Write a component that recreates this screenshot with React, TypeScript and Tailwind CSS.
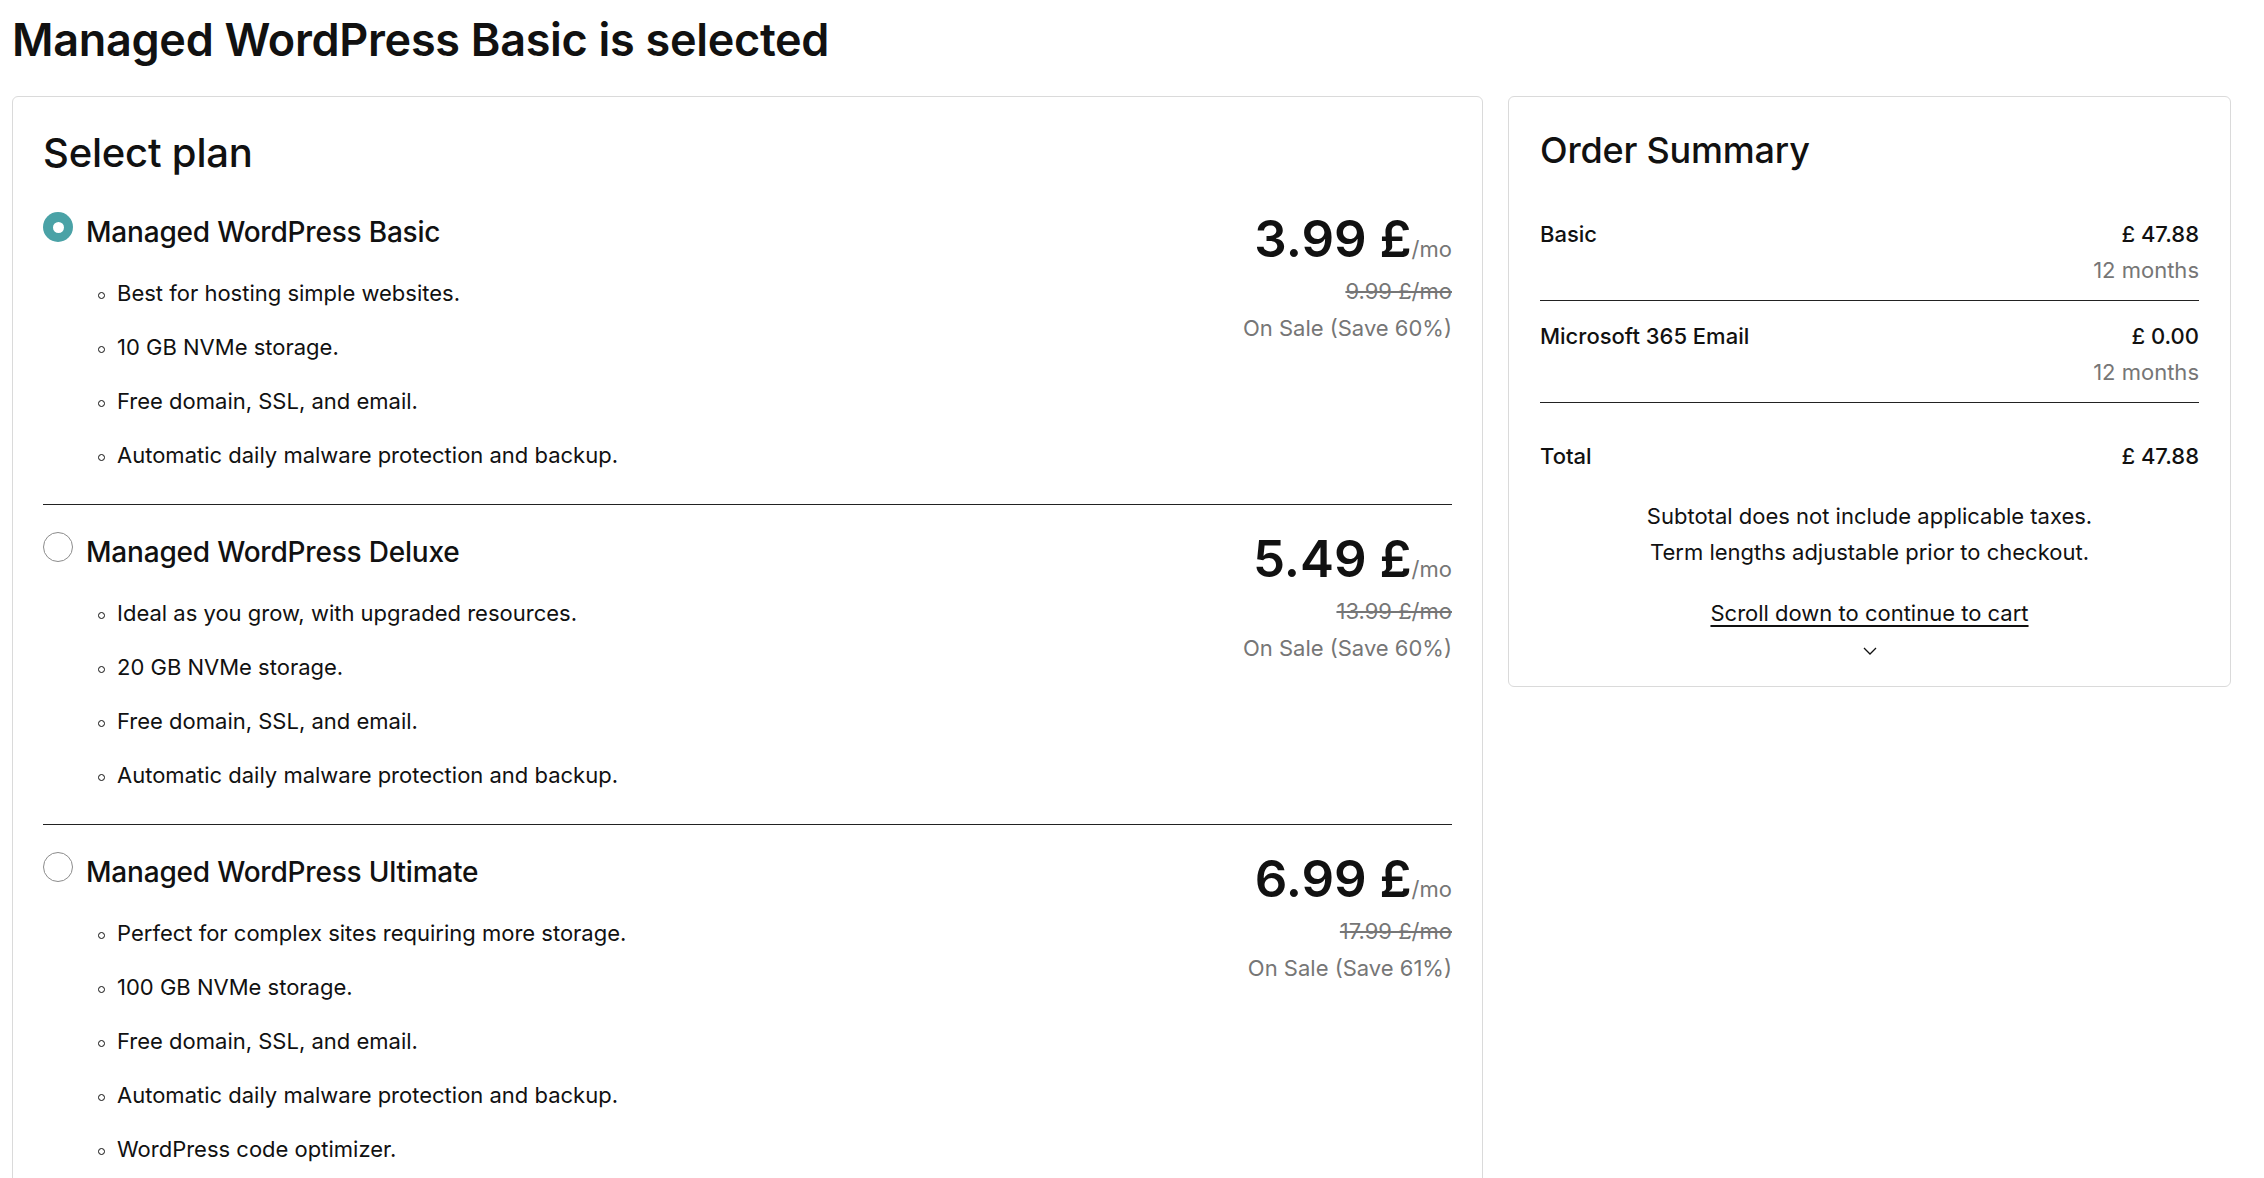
import React from 'react';

type Plan = {
  name: string;
  price: string;
  was: string;
  save: string;
  features: string[];
  selected?: boolean;
};

const plans: Plan[] = [
  {
    name: 'Managed WordPress Basic',
    price: '3.99 £',
    was: '9.99 £/mo',
    save: 'On Sale (Save 60%)',
    selected: true,
    features: [
      'Best for hosting simple websites.',
      '10 GB NVMe storage.',
      'Free domain, SSL, and email.',
      'Automatic daily malware protection and backup.',
    ],
  },
  {
    name: 'Managed WordPress Deluxe',
    price: '5.49 £',
    was: '13.99 £/mo',
    save: 'On Sale (Save 60%)',
    features: [
      'Ideal as you grow, with upgraded resources.',
      '20 GB NVMe storage.',
      'Free domain, SSL, and email.',
      'Automatic daily malware protection and backup.',
    ],
  },
  {
    name: 'Managed WordPress Ultimate',
    price: '6.99 £',
    was: '17.99 £/mo',
    save: 'On Sale (Save 61%)',
    features: [
      'Perfect for complex sites requiring more storage.',
      '100 GB NVMe storage.',
      'Free domain, SSL, and email.',
      'Automatic daily malware protection and backup.',
      'WordPress code optimizer.',
    ],
  },
];

function Radio({ checked }: { checked?: boolean }) {
  if (checked) {
    return (
      <span className="mt-[-3px] flex h-[30px] w-[30px] shrink-0 items-center justify-center rounded-full bg-[#4aa2a6]">
        <span className="h-[11px] w-[11px] rounded-full bg-white" />
      </span>
    );
  }
  return <span className="mt-[-3px] h-[30px] w-[30px] shrink-0 rounded-full border border-[#8c8c8c] bg-white" />;
}

function PlanRow({ plan }: { plan: Plan }) {
  return (
    <div className="border-b border-[#222] pb-[34px] pt-[30px] first:pt-0 last:border-b-0">
      <div className="flex items-start justify-between">
        <div>
          <div className="flex items-start gap-[13px]">
            <Radio checked={plan.selected} />
            <h3 className="text-[28px] font-medium leading-[34px] tracking-[-0.2px]">{plan.name}</h3>
          </div>
          <ul className="ml-[55px] mt-[29px] flex flex-col gap-[24px]">
            {plan.features.map((f) => (
              <li key={f} className="flex items-start gap-[12px] text-[22px] leading-[30px]">
                <span className="mt-[14px] h-[7px] w-[7px] shrink-0 rounded-full border border-[#111]" />
                <span>{f}</span>
              </li>
            ))}
          </ul>
        </div>
        <div className="mt-[-2px] text-right">
          <div className="leading-[52px]">
            <span className="text-[51px] font-semibold">{plan.price}</span>
            <span className="text-[22px] text-[#767676]">/mo</span>
          </div>
          <div className="mt-[-5px] text-[22px] leading-[38px] text-[#767676] line-through">{plan.was}</div>
          <div className="text-[22px] leading-[36px] text-[#767676]">{plan.save}</div>
        </div>
      </div>
    </div>
  );
}

function SummaryLine({ label, amount, term }: { label: string; amount: string; term?: string }) {
  return (
    <div className="flex items-start justify-between text-[22px] leading-[36px]">
      <span className="font-medium">{label}</span>
      <div className="text-right">
        <div className="font-medium">{amount}</div>
        {term && <div className="text-[#767676]">{term}</div>}
      </div>
    </div>
  );
}

export default function App() {
  return (
    <div className="min-h-screen bg-white pl-3 pt-3 text-[#111] font-['Inter','Noto_Sans',sans-serif]">
      <h1 className="text-[45px] font-semibold leading-[55px] tracking-[-0.3px]">Managed WordPress Basic is selected</h1>

      <div className="mt-[29px] flex items-start gap-[25px]">
        {/* Plans */}
        <section className="w-[1471px] rounded-md border border-[#dadada] px-[30px] pb-[40px] pt-[32px]">
          <h2 className="text-[40px] font-medium leading-[48px] tracking-[-0.2px]">Select plan</h2>
          <div className="mt-[38px]">
            {plans.map((p) => (
              <PlanRow key={p.name} plan={p} />
            ))}
          </div>
        </section>

        {/* Order summary */}
        <aside className="w-[723px] rounded-md border border-[#dadada] px-[31px] pb-[27px] pt-[32px]">
          <h2 className="text-[36px] font-medium leading-[43px] tracking-[-0.2px]">Order Summary</h2>
          <div className="mt-[44px]">
            <div className="border-b border-[#222] pb-[12px]">
              <SummaryLine label="Basic" amount="£ 47.88" term="12 months" />
            </div>
            <div className="border-b border-[#222] pb-[12px] pt-[17px]">
              <SummaryLine label="Microsoft 365 Email" amount="£ 0.00" term="12 months" />
            </div>
            <div className="pt-[35px]">
              <SummaryLine label="Total" amount="£ 47.88" />
            </div>
          </div>
          <p className="mt-[24px] text-center text-[22px] leading-[36px]">
            Subtotal does not include applicable taxes.
            <br />
            Term lengths adjustable prior to checkout.
          </p>
          <div className="mt-[25px] text-center text-[22px] leading-[36px]">
            <a href="#cart" className="underline underline-offset-[4px]">
              Scroll down to continue to cart
            </a>
          </div>
          <div className="mt-[12px] flex justify-center">
            <svg width="16" height="16" viewBox="0 0 16 16" fill="none">
              <polyline points="2,5 8,11 14,5" stroke="#111" strokeWidth="1.3" />
            </svg>
          </div>
        </aside>
      </div>
    </div>
  );
}
